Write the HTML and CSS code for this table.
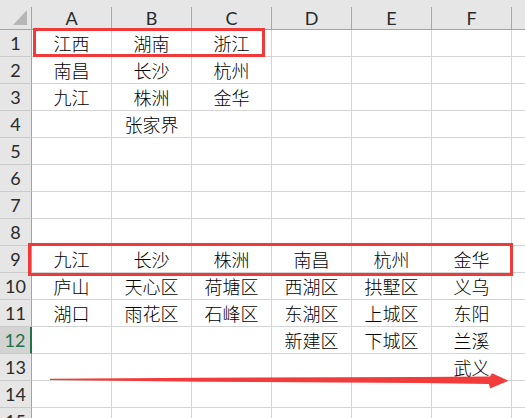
FILE: index.html
```html
<!DOCTYPE html>
<html lang="zh">
<head>
<meta charset="utf-8">
<link rel="stylesheet" href="styles.css">
</head>
<body>
<div class="sheet">
  <div class="grid">
    <div class="strip"></div>
    <div class="corner"><svg class="tri" width="31" height="22" viewBox="0 0 31 22"><polygon points="27,3 27,18 13,18" fill="#b6b6b6"/></svg></div>
    <div class="ch">A</div><div class="ch">B</div><div class="ch">C</div><div class="ch">D</div><div class="ch">E</div><div class="ch">F</div><div class="ch"></div>

    <div class="rh">1</div><div class="c">江西</div><div class="c">湖南</div><div class="c">浙江</div><div class="c"></div><div class="c"></div><div class="c"></div><div class="c"></div>
    <div class="rh">2</div><div class="c">南昌</div><div class="c">长沙</div><div class="c">杭州</div><div class="c"></div><div class="c"></div><div class="c"></div><div class="c"></div>
    <div class="rh">3</div><div class="c">九江</div><div class="c">株洲</div><div class="c">金华</div><div class="c"></div><div class="c"></div><div class="c"></div><div class="c"></div>
    <div class="rh">4</div><div class="c"></div><div class="c">张家界</div><div class="c"></div><div class="c"></div><div class="c"></div><div class="c"></div><div class="c"></div>
    <div class="rh">5</div><div class="c"></div><div class="c"></div><div class="c"></div><div class="c"></div><div class="c"></div><div class="c"></div><div class="c"></div>
    <div class="rh">6</div><div class="c"></div><div class="c"></div><div class="c"></div><div class="c"></div><div class="c"></div><div class="c"></div><div class="c"></div>
    <div class="rh">7</div><div class="c"></div><div class="c"></div><div class="c"></div><div class="c"></div><div class="c"></div><div class="c"></div><div class="c"></div>
    <div class="rh">8</div><div class="c"></div><div class="c"></div><div class="c"></div><div class="c"></div><div class="c"></div><div class="c"></div><div class="c"></div>
    <div class="rh">9</div><div class="c">九江</div><div class="c">长沙</div><div class="c">株洲</div><div class="c">南昌</div><div class="c">杭州</div><div class="c">金华</div><div class="c"></div>
    <div class="rh">10</div><div class="c">庐山</div><div class="c">天心区</div><div class="c">荷塘区</div><div class="c">西湖区</div><div class="c">拱墅区</div><div class="c">义乌</div><div class="c"></div>
    <div class="rh">11</div><div class="c">湖口</div><div class="c">雨花区</div><div class="c">石峰区</div><div class="c">东湖区</div><div class="c">上城区</div><div class="c">东阳</div><div class="c"></div>
    <div class="rh sel">12</div><div class="c"></div><div class="c"></div><div class="c"></div><div class="c">新建区</div><div class="c">下城区</div><div class="c">兰溪</div><div class="c"></div>
    <div class="rh">13</div><div class="c"></div><div class="c"></div><div class="c"></div><div class="c"></div><div class="c"></div><div class="c">武义</div><div class="c"></div>
    <div class="rh">14</div><div class="c"></div><div class="c"></div><div class="c"></div><div class="c"></div><div class="c"></div><div class="c"></div><div class="c"></div>
    <div class="rh">15</div><div class="c"></div><div class="c"></div><div class="c"></div><div class="c"></div><div class="c"></div><div class="c"></div><div class="c"></div>
  </div>

  <div class="box box-top"></div>
  <div class="box box-bottom"></div>
  <svg class="arrow" width="525" height="418" viewBox="0 0 525 418">
    <polygon points="50,378.7 200,377.8 420,377 490,376.6 492,373.3 508.5,380.8 490,388.4 489,384 420,383 200,381.7 50,380" fill="#f23b3b"/>
  </svg>
</div>
</body>
</html>
```

FILE: styles.css
```css
html, body {
  margin: 0;
  padding: 0;
  background: #ffffff;
  overflow: hidden;
  width: 525px;
  height: 418px;
}

.sheet {
  position: relative;
  width: 525px;
  height: 418px;
  overflow: hidden;
}

.grid {
  display: grid;
  grid-template-columns: 32px repeat(7, 80px);
  grid-template-rows: 7px 23px repeat(15, 27px);
  width: 592px;
}

.grid > div {
  box-sizing: border-box;
}

.strip {
  grid-column: 1 / -1;
  background: #e6e6e6;
}

.corner {
  background: #e6e6e6;
  border-right: 1px solid #a3a3a3;
  border-bottom: 1px solid #a3a3a3;
}

.tri {
  display: block;
}

.ch {
  background: #e6e6e6;
  border-right: 1px solid #a8a8a8;
  border-bottom: 1px solid #a3a3a3;
  font-family: Lato, "Open Sans", sans-serif;
  font-size: 18px;
  line-height: 22px;
  color: #2a2a2a;
  text-align: center;
}

.rh {
  background: #e6e6e6;
  border-right: 1px solid #a3a3a3;
  border-bottom: 1px solid #cacaca;
  font-family: Lato, "Open Sans", sans-serif;
  font-size: 18px;
  line-height: 26px;
  color: #2a2a2a;
  text-align: center;
}

.rh.sel {
  background: #d3d3d3;
  color: #217346;
  border-right: 2px solid #217346;
}

.c {
  border-right: 1px solid #d4d4d4;
  border-bottom: 1px solid #d4d4d4;
  font-family: "Noto Sans CJK SC", sans-serif;
  font-size: 18px;
  font-weight: 300;
  line-height: 25px;
  padding-top: 1px;
  color: #000000;
  text-align: center;
  white-space: nowrap;
  overflow: hidden;
}

.box {
  position: absolute;
  box-sizing: border-box;
  border: 3px solid #f03a3a;
}

.box-top {
  left: 33px;
  top: 28px;
  width: 232px;
  height: 29px;
}

.box-bottom {
  left: 28px;
  top: 243px;
  width: 485px;
  height: 33px;
}

.arrow {
  position: absolute;
  left: 0;
  top: 0;
}
```
